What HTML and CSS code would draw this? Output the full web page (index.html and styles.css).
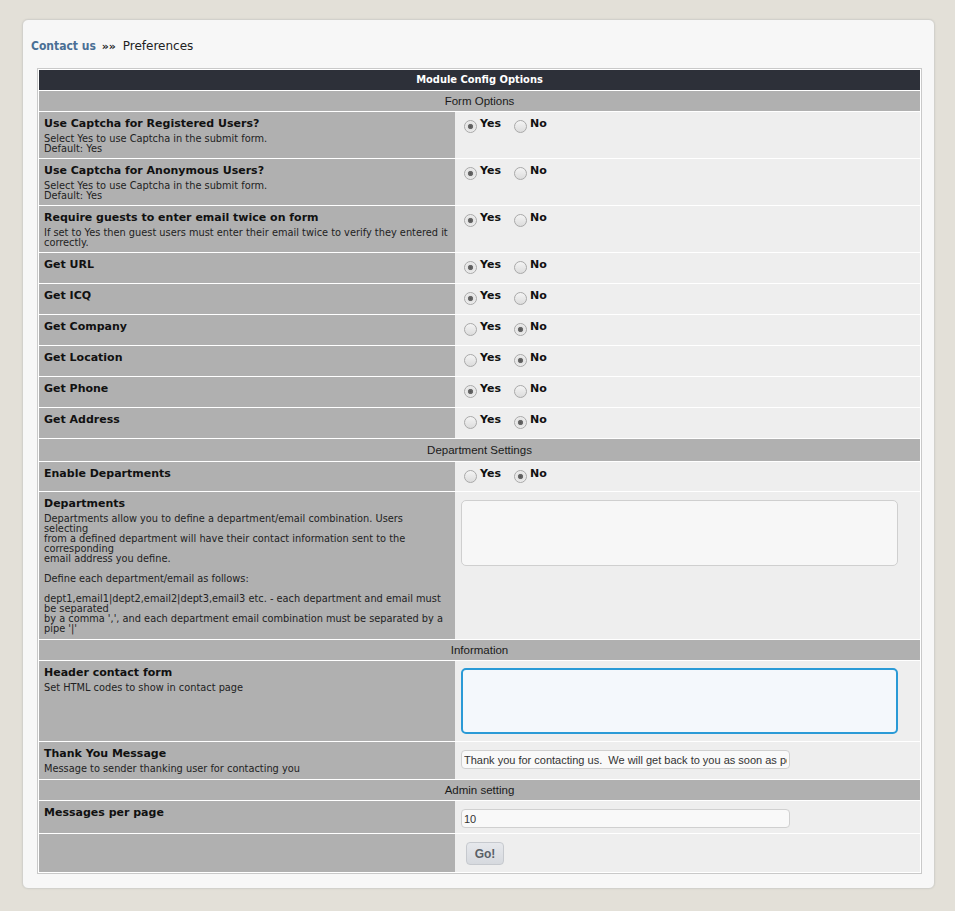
FILE: index.html
```html
<!DOCTYPE html>
<html>
<head>
<meta charset="utf-8">
<title>Contact us - Preferences</title>
<link rel="stylesheet" href="styles.css">
</head>
<body>
<div class="card">
  <div class="crumbs"><a class="crumb-link" href="#">Contact us</a> <span class="sep">&raquo;&raquo;</span> Preferences</div>
  <form class="cfg-form">
  <table class="config">
    <colgroup><col class="c-left"><col class="c-right"></colgroup>
    <tr><th colspan="2" class="head">Module Config Options</th></tr>
    <tr><td colspan="2" class="section">Form Options</td></tr>

    <tr class="h46">
      <td class="lbl"><div class="title">Use Captcha for Registered Users?</div><div class="desc">Select Yes to use Captcha in the submit form.<br>Default: Yes</div></td>
      <td class="val"><label class="opt"><input type="radio" name="r1" checked>Yes</label><label class="opt"><input type="radio" name="r1">No</label></td>
    </tr>
    <tr class="h46">
      <td class="lbl"><div class="title">Use Captcha for Anonymous Users?</div><div class="desc">Select Yes to use Captcha in the submit form.<br>Default: Yes</div></td>
      <td class="val"><label class="opt"><input type="radio" name="r2" checked>Yes</label><label class="opt"><input type="radio" name="r2">No</label></td>
    </tr>
    <tr class="h46">
      <td class="lbl"><div class="title">Require guests to enter email twice on form</div><div class="desc">If set to Yes then guest users must enter their email twice to verify they entered it<br>correctly.</div></td>
      <td class="val"><label class="opt"><input type="radio" name="r3" checked>Yes</label><label class="opt"><input type="radio" name="r3">No</label></td>
    </tr>
    <tr class="h30">
      <td class="lbl"><div class="title">Get URL</div></td>
      <td class="val"><label class="opt"><input type="radio" name="r4" checked>Yes</label><label class="opt"><input type="radio" name="r4">No</label></td>
    </tr>
    <tr class="h30">
      <td class="lbl"><div class="title">Get ICQ</div></td>
      <td class="val"><label class="opt"><input type="radio" name="r5" checked>Yes</label><label class="opt"><input type="radio" name="r5">No</label></td>
    </tr>
    <tr class="h30">
      <td class="lbl"><div class="title">Get Company</div></td>
      <td class="val"><label class="opt"><input type="radio" name="r6">Yes</label><label class="opt"><input type="radio" name="r6" checked>No</label></td>
    </tr>
    <tr class="h30">
      <td class="lbl"><div class="title">Get Location</div></td>
      <td class="val"><label class="opt"><input type="radio" name="r7">Yes</label><label class="opt"><input type="radio" name="r7" checked>No</label></td>
    </tr>
    <tr class="h30">
      <td class="lbl"><div class="title">Get Phone</div></td>
      <td class="val"><label class="opt"><input type="radio" name="r8" checked>Yes</label><label class="opt"><input type="radio" name="r8">No</label></td>
    </tr>
    <tr class="h30">
      <td class="lbl"><div class="title">Get Address</div></td>
      <td class="val"><label class="opt"><input type="radio" name="r9">Yes</label><label class="opt"><input type="radio" name="r9" checked>No</label></td>
    </tr>

    <tr><td colspan="2" class="section sec22">Department Settings</td></tr>
    <tr class="h29">
      <td class="lbl"><div class="title">Enable Departments</div></td>
      <td class="val"><label class="opt"><input type="radio" name="r10">Yes</label><label class="opt"><input type="radio" name="r10" checked>No</label></td>
    </tr>
    <tr class="h147">
      <td class="lbl"><div class="title">Departments</div><div class="desc dept">Departments allow you to define a department/email combination. Users<br>selecting<br>from a defined department will have their contact information sent to the<br>corresponding<br>email address you define.<br><br>Define each department/email as follows:<br><br>dept1,email1|dept2,email2|dept3,email3 etc. - each department and email must<br>be separated<br>by a comma ',', and each department email combination must be separated by a<br>pipe '|'</div></td>
      <td class="val"><textarea class="area"></textarea></td>
    </tr>

    <tr><td colspan="2" class="section">Information</td></tr>
    <tr class="h80">
      <td class="lbl"><div class="title">Header contact form</div><div class="desc">Set HTML codes to show in contact page</div></td>
      <td class="val"><textarea class="area focus"></textarea></td>
    </tr>
    <tr class="h37">
      <td class="lbl"><div class="title">Thank You Message</div><div class="desc">Message to sender thanking user for contacting you</div></td>
      <td class="val"><input class="txt" type="text" value="Thank you for contacting us.  We will get back to you as soon as possible."></td>
    </tr>

    <tr><td colspan="2" class="section">Admin setting</td></tr>
    <tr class="h32">
      <td class="lbl"><div class="title">Messages per page</div></td>
      <td class="val"><input class="txt" type="text" value="10"></td>
    </tr>
    <tr class="h38 last">
      <td class="lbl"></td>
      <td class="val"><button type="button" class="go">Go!</button></td>
    </tr>
  </table>
  </form>
</div>
</body>
</html>
```

FILE: styles.css
```css
html, body {
  margin: 0;
  padding: 0;
  background: #e3e0d8;
}
body {
  padding: 19px 0 22px 22px;
  font-family: "DejaVu Sans", sans-serif;
  color: #111;
}
.card {
  width: 911px;
  background: #f7f7f7;
  border: 1px solid #d2d1cc;
  border-radius: 6px;
  box-shadow: 0 0 2px rgba(0, 0, 0, 0.08);
  padding-bottom: 14px;
}
.crumbs {
  padding: 18px 0 0 8px;
  height: 16px;
  line-height: 16px;
  font-size: 12px;
  color: #222;
}
.crumb-link {
  font-family: "DejaVu Sans Condensed", "DejaVu Sans", sans-serif;
  font-stretch: condensed;
  color: #4a6f95;
  font-weight: bold;
  text-decoration: none;
}
.sep {
  font-weight: bold;
  font-size: 11px;
  margin: 0 3px 0 2px;
}
.cfg-form {
  margin: 14px 0 0 14px;
}
.config {
  width: 885px;
  table-layout: fixed;
  border-collapse: separate;
  border-spacing: 0;
  border: 1px solid #c9c9c9;
  padding: 1px;
  background: #fff;
}
.c-left { width: 416px; }
.c-right { width: 465px; }
.config td, .config th {
  border-bottom: 1px solid #fff;
  padding: 0;
  vertical-align: top;
}
.config tr.last td { border-bottom: 0; }
.head {
  background: #2d3039;
  color: #fff;
  font-family: "DejaVu Sans Condensed", "DejaVu Sans", sans-serif;
  font-stretch: condensed;
  font-size: 11px;
  font-weight: bold;
  height: 20px;
  line-height: 20px;
  text-align: center;
}
.section {
  background: #b0b0b0;
  font-family: "Liberation Sans", Arial, sans-serif;
  font-size: 11.5px;
  color: #1a1a1a;
  text-align: center;
  height: 20px;
  line-height: 20px;
}
.config td.sec22 { height: 22px; line-height: 22px; }
.lbl {
  background: #b0b0b0;
  padding: 5px 5px 0 5px !important;
}
.val {
  background: #eeeeee;
  padding: 5px 6px 0 6px !important;
  font-size: 11px;
  line-height: 14px;
}
.h46 td { height: 41px; }
.h30 td { height: 25px; }
.h29 td { height: 24px; }
.h147 td { height: 142px; }
.h80 td { height: 75px; }
.h37 td { height: 32px; }
.h32 td { height: 27px; }
.h38 td { height: 33px; }
.title {
  font-size: 11px;
  font-weight: bold;
  line-height: 14px;
  color: #111;
}
.desc {
  margin-top: 3px;
  font-size: 9.8px;
  line-height: 10px;
  color: #222;
  white-space: nowrap;
}
.desc.dept { margin-top: 3px; }
.opt {
  display: inline-block;
  font-size: 11px;
  font-weight: bold;
  line-height: 14px;
  margin-right: 10px;
  color: #111;
}
.opt input {
  -webkit-appearance: none;
  appearance: none;
  width: 13px;
  height: 13px;
  margin: 0 3px 0 3px;
  border: 1px solid #a9a9a9;
  border-radius: 50%;
  background: linear-gradient(#f4f4f4, #dcdcdc);
  vertical-align: -6px;
  box-sizing: border-box;
}
.opt input:checked {
  background: radial-gradient(circle, #555 0, #6a6a6a 2.2px, #e2e2e2 3px, #f0f0f0 6px);
}
.area {
  display: block;
  margin: 3px 0 0 0;
  width: 437px;
  height: 66px;
  box-sizing: border-box;
  border: 1px solid #cfcfcf;
  border-radius: 5px;
  background: #f7f7f7;
  resize: none;
  font-family: "Liberation Sans", Arial, sans-serif;
}
.area.focus {
  margin-top: 2px;
  border: 2px solid #2a9ad6;
  background: #f4f8fc;
  outline: none;
}
.txt {
  display: block;
  margin: 3px 0 0 0;
  width: 329px;
  height: 19px;
  box-sizing: border-box;
  border: 1px solid #d0d0d0;
  border-radius: 4px;
  background: #f9f9f9;
  padding: 0 2px;
  font-family: "Liberation Sans", Arial, sans-serif;
  font-size: 11px;
  color: #333;
}
.go {
  margin: 3px 0 0 5px;
  width: 38px;
  height: 23px;
  border: 1px solid #c6c9ce;
  border-radius: 4px;
  background: linear-gradient(#e6e8ec, #d6d9de);
  font-family: "Liberation Sans", Arial, sans-serif;
  font-size: 12px;
  font-weight: bold;
  color: #5a5f66;
  padding: 0;
}
```
